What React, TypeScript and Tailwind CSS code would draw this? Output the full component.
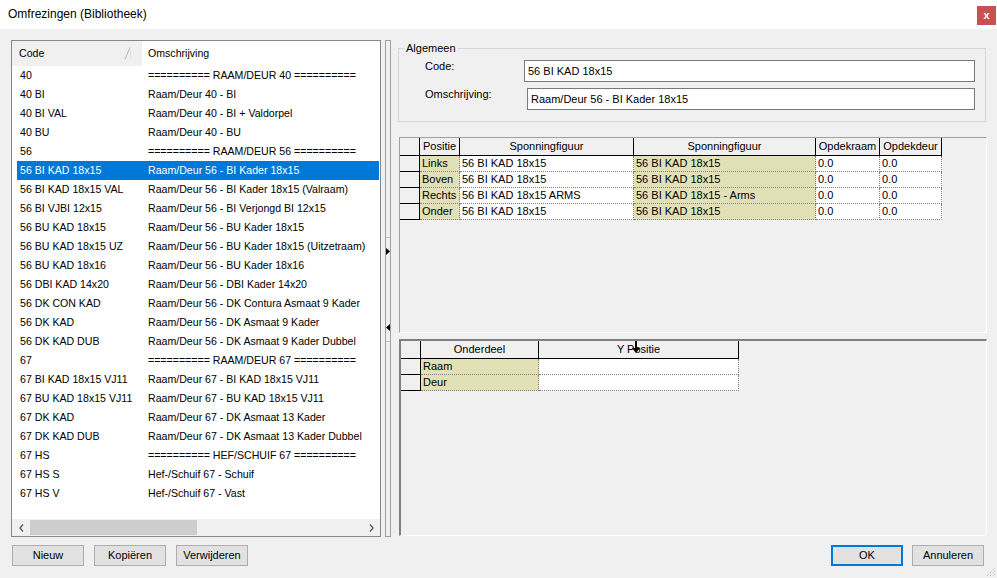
import React from "react";

const ITEMS: [string, string][] = [
  ["40", "========== RAAM/DEUR 40 =========="],
  ["40 BI", "Raam/Deur 40 - BI"],
  ["40 BI VAL", "Raam/Deur 40 - BI + Valdorpel"],
  ["40 BU", "Raam/Deur 40 - BU"],
  ["56", "========== RAAM/DEUR 56 =========="],
  ["56 BI KAD 18x15", "Raam/Deur 56 - BI Kader 18x15"],
  ["56 BI KAD 18x15 VAL", "Raam/Deur 56 - BI Kader 18x15 (Valraam)"],
  ["56 BI VJBI 12x15", "Raam/Deur 56 - BI Verjongd BI 12x15"],
  ["56 BU KAD 18x15", "Raam/Deur 56 - BU Kader 18x15"],
  ["56 BU KAD 18x15 UZ", "Raam/Deur 56 - BU Kader 18x15 (Uitzetraam)"],
  ["56 BU KAD 18x16", "Raam/Deur 56 - BU Kader 18x16"],
  ["56 DBI KAD 14x20", "Raam/Deur 56 - DBI Kader 14x20"],
  ["56 DK CON KAD", "Raam/Deur 56 - DK Contura Asmaat 9 Kader"],
  ["56 DK KAD", "Raam/Deur 56 - DK Asmaat 9 Kader"],
  ["56 DK KAD DUB", "Raam/Deur 56 - DK Asmaat 9 Kader Dubbel"],
  ["67", "========== RAAM/DEUR 67 =========="],
  ["67 BI KAD 18x15 VJ11", "Raam/Deur 67 - BI KAD 18x15 VJ11"],
  ["67 BU KAD 18x15 VJ11", "Raam/Deur 67 - BU KAD 18x15 VJ11"],
  ["67 DK KAD", "Raam/Deur 67 - DK Asmaat 13 Kader"],
  ["67 DK KAD DUB", "Raam/Deur 67 - DK Asmaat 13 Kader Dubbel"],
  ["67 HS", "========== HEF/SCHUIF 67 =========="],
  ["67 HS S", "Hef-/Schuif 67 - Schuif"],
  ["67 HS V", "Hef-/Schuif 67 - Vast"],
];

const SIDES = [
  { pos: "Links", a: "56 BI KAD 18x15", b: "56 BI KAD 18x15" },
  { pos: "Boven", a: "56 BI KAD 18x15", b: "56 BI KAD 18x15" },
  { pos: "Rechts", a: "56 BI KAD 18x15 ARMS", b: "56 BI KAD 18x15 - Arms" },
  { pos: "Onder", a: "56 BI KAD 18x15", b: "56 BI KAD 18x15" },
];

const hdr = "h-[18px] shrink-0 bg-[#f0f0f0] border-r border-b border-black flex items-center justify-center";
const rowHdr = "w-[20px] h-[16px] shrink-0 bg-[#f0f0f0] border-r border-b border-black";
const cell = "h-[16px] shrink-0 border-r border-b border-dotted border-[#808080] flex items-center pl-[2px] whitespace-nowrap overflow-hidden";
const khaki = "bg-[#e2e0b6]";

function Button({ label, primary }: { label: string; primary?: boolean }) {
  return (
    <button
      className={`w-[72px] h-[21px] bg-[#e1e1e1] text-[11px] text-black flex items-center justify-center ${
        primary ? "border-2 border-[#0078d7]" : "border border-[#adadad]"
      }`}
    >
      {label}
    </button>
  );
}

export default function App() {
  return (
    <div className="w-[997px] h-[578px] bg-[#f0f0f0] flex flex-col relative overflow-hidden font-['Liberation_Sans',Arial,sans-serif] text-black">
      {/* Title bar */}
      <div className="h-[29px] bg-white flex items-start justify-between shrink-0">
        <span className="text-[12px] pl-[8px] pt-[5px]">Omfrezingen (Bibliotheek)</span>
        <div className="w-[19px] h-[19px] mt-[6px] mr-[1px] bg-[#c75050] text-white text-[11px] font-bold flex items-center justify-center leading-none">
          x
        </div>
      </div>

      {/* Main area */}
      <div className="flex pt-[11px] h-[508px] shrink-0">
        {/* List */}
        <div className="ml-[11px] w-[370px] h-[497px] border border-[#828790] bg-white flex flex-col text-[10.6px]">
          <div className="h-[25px] flex shrink-0">
            <div className="w-[130px] bg-[#f0f0f0] flex items-center pl-[7px] relative">
              Code
              <svg className="absolute left-[112px] top-[6px]" width="8" height="13" viewBox="0 0 8 13">
                <path d="M6 0.5 L1 12.5" stroke="#b8b8b8" strokeWidth="1" fill="none" />
                <path d="M6 0.5 L7 12.5" stroke="#e2e2e2" strokeWidth="1" fill="none" />
              </svg>
            </div>
            <div className="flex-1 flex items-center pl-[6px]">Omschrijving</div>
          </div>
          <div className="flex-1">
            {ITEMS.map(([code, desc], i) => {
              const sel = i === 5;
              return (
                <div
                  key={code}
                  className={`h-[19px] ml-[5px] mr-[1px] flex items-center whitespace-nowrap ${
                    sel ? "bg-[#0078d7] text-white" : ""
                  }`}
                >
                  <span className="w-[131px] pl-[3px] shrink-0">{code}</span>
                  <span>{desc}</span>
                </div>
              );
            })}
          </div>
          {/* horizontal scrollbar */}
          <div className="h-[17px] bg-[#f0f0f0] flex items-center shrink-0">
            <div className="w-[18px] flex justify-center">
              <svg width="5" height="8" viewBox="0 0 5 8">
                <path d="M4 0.5 L1 4 L4 7.5" stroke="#606060" strokeWidth="1.4" fill="none" />
              </svg>
            </div>
            <div className="w-[167px] h-[15px] bg-[#cdcdcd]" />
            <div className="flex-1" />
            <div className="w-[18px] flex justify-center">
              <svg width="5" height="8" viewBox="0 0 5 8">
                <path d="M1 0.5 L4 4 L1 7.5" stroke="#606060" strokeWidth="1.4" fill="none" />
              </svg>
            </div>
          </div>
        </div>

        {/* Splitter */}
        <div className="ml-[4px] w-[6px] h-[497px] border border-[#a0a0a0] flex flex-col items-center shrink-0">
          <div className="w-full border-b border-[#c8c8c8] mt-[196px]" />
          <svg className="mt-[10px]" width="4" height="7" viewBox="0 0 4 7">
            <path d="M0 0 L4 3.5 L0 7 Z" fill="#000" />
          </svg>
          <svg className="mt-[69px]" width="4" height="7" viewBox="0 0 4 7">
            <path d="M4 0 L0 3.5 L4 7 Z" fill="#000" />
          </svg>
          <div className="w-full border-b border-[#c8c8c8] mt-[10px]" />
        </div>

        {/* Right column */}
        <div className="ml-[7px] w-[589px] flex flex-col text-[11px]">
          <fieldset className="mt-[2px] h-[80px] border border-[#d5d5d5] mr-[1px] min-w-0">
            <legend className="ml-[5px] px-[2px] text-[11px] leading-[13px]">Algemeen</legend>
            <div className="flex items-start mt-[5px] pl-[26px]">
              <span className="w-[99px] leading-[13px]">Code:</span>
              <div className="w-[451px] h-[22px] bg-white border border-[#7a7a7a] flex items-center pl-[3px]">
                56 BI KAD 18x15
              </div>
            </div>
            <div className="flex items-start mt-[6px] pl-[26px]">
              <span className="w-[102px] leading-[13px]">Omschrijving:</span>
              <div className="w-[448px] h-[22px] bg-white border border-[#7a7a7a] flex items-center pl-[3px]">
                Raam/Deur 56 - BI Kader 18x15
              </div>
            </div>
          </fieldset>

          {/* Sides grid */}
          <div className="mt-[15px] ml-[1px] w-[588px] h-[196px] border-t border-l border-[#a0a0a0] border-r border-b border-r-white border-b-white">
            <div className="flex">
              <div className={`${hdr} w-[20px]`} />
              <div className={`${hdr} w-[40px]`}>Positie</div>
              <div className={`${hdr} w-[174px]`}>Sponningfiguur</div>
              <div className={`${hdr} w-[182px]`}>Sponningfiguur</div>
              <div className={`${hdr} w-[64px]`}>Opdekraam</div>
              <div className={`${hdr} w-[62px]`}>Opdekdeur</div>
            </div>
            {SIDES.map((s) => (
              <div key={s.pos} className="flex">
                <div className={rowHdr} />
                <div className={`${cell} ${khaki} w-[40px]`}>{s.pos}</div>
                <div className={`${cell} bg-white w-[174px]`}>{s.a}</div>
                <div className={`${cell} ${khaki} w-[182px]`}>{s.b}</div>
                <div className={`${cell} bg-white w-[64px]`}>0.0</div>
                <div className={`${cell} bg-white w-[62px]`}>0.0</div>
              </div>
            ))}
          </div>

          {/* Parts grid */}
          <div className="mt-[6px] ml-[1px] w-[588px] h-[197px] border-t-2 border-l-2 border-[#808080] border-r border-b border-r-white border-b-white">
            <div className="flex">
              <div className={`${hdr} w-[20px]`} />
              <div className={`${hdr} w-[118px]`}>Onderdeel</div>
              <div className={`${hdr} w-[200px] relative`}>
                Y Positie
                <svg className="absolute left-[93px] top-[0px]" width="8" height="12" viewBox="0 0 8 12">
                  <path d="M3 0 H5 V7 H8 L4 12 L0 7 H3 Z" fill="#000" />
                </svg>
              </div>
            </div>
            {["Raam", "Deur"].map((p) => (
              <div key={p} className="flex">
                <div className={rowHdr} />
                <div className={`${cell} ${khaki} w-[118px]`}>{p}</div>
                <div className={`${cell} bg-white w-[200px]`} />
              </div>
            ))}
          </div>
        </div>
      </div>

      {/* Bottom buttons */}
      <div className="flex items-start pt-[8px] pl-[12px]">
        <div className="flex gap-[10px]">
          <Button label="Nieuw" />
          <Button label="Kopiëren" />
          <Button label="Verwijderen" />
        </div>
        <div className="flex-1" />
        <div className="flex gap-[9px] mr-[13px]">
          <Button label="OK" primary />
          <Button label="Annuleren" />
        </div>
      </div>

      {/* Resize grip */}
      <svg className="absolute right-[1px] bottom-[1px]" width="11" height="11" viewBox="0 0 11 11">
        <path d="M10 2 L2 10 M10 5 L5 10 M10 8 L8 10" stroke="#b5b5b5" strokeWidth="1" strokeDasharray="1 1" />
      </svg>
    </div>
  );
}
